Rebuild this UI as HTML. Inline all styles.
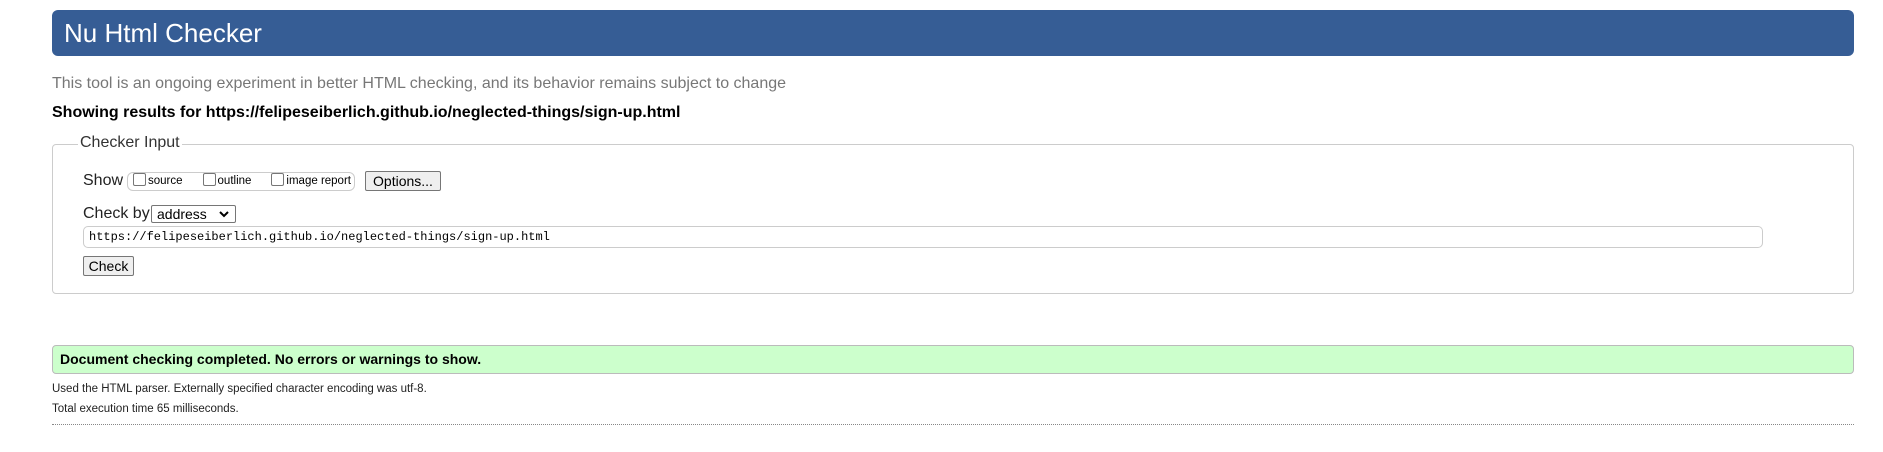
<!DOCTYPE html>
<html><head><meta charset="utf-8"><style>
*{box-sizing:border-box}
body{margin:0;width:1883px;height:452px;background:#fff;font-family:"Liberation Sans",Arial,sans-serif;position:relative;overflow:hidden}
.a{position:absolute;white-space:nowrap}
#h{left:52px;top:10px;width:1802px;height:46px;background:#365d95;border-radius:6px;color:#fff;font-size:26px;padding-left:12px;line-height:46px}
#fs{left:52px;top:144px;width:1802px;height:150px;border:1px solid #ccc;border-radius:4px}
.btn{background:#efefef;border:1px solid #767676;border-radius:2px;font-size:14px;text-align:center;color:#000}
.cb{display:inline-block;width:13px;height:13px;border:1px solid #767676;border-radius:2px;vertical-align:-2px;margin-right:2px}
</style></head><body>
<div class="a" id="h">Nu Html Checker</div>
<div class="a" style="left:52px;top:75px;font-size:16px;color:#777">This tool is an ongoing experiment in better HTML checking, and its behavior remains subject to change</div>
<div class="a" style="left:52px;top:104px;font-size:16px;font-weight:bold;color:#000">Showing results for https://felipeseiberlich.github.io/neglected-things/sign-up.html</div>
<div class="a" id="fs"></div>
<div class="a" style="left:78px;top:134px;background:#fff;padding:0 2px;font-size:16px;color:#333">Checker Input</div>
<div class="a" style="left:83px;top:172px;font-size:16px;color:#222">Show</div>
<div class="a" style="left:127px;top:172px;width:228px;height:19px;border:1px solid #ccc;border-radius:6px;font-size:11.5px;line-height:17px;padding-left:5px;color:#000"><span class="cb"></span>source<span style="display:inline-block;width:20px"></span><span class="cb"></span>outline<span style="display:inline-block;width:20px"></span><span class="cb"></span>image report</div>
<div class="a btn" style="left:365px;top:171px;width:76px;height:20px;line-height:18px">Options...</div>
<div class="a" style="left:83px;top:205px;font-size:16px;color:#222">Check by</div>
<div class="a" style="left:151px;top:205px;width:85px;height:18px;border:1px solid #767676;border-radius:2px;font-size:14px;line-height:16px;padding-left:5px">address<svg style="position:absolute;right:6px;top:5px" width="10" height="7" viewBox="0 0 10 7"><path d="M1 1l4 4 4-4" stroke="#000" stroke-width="2" fill="none"/></svg></div>
<div class="a" style="left:83px;top:226px;width:1680px;height:22px;border:1px solid #ccc;border-radius:5px;font-family:'Liberation Mono',monospace;font-size:12px;line-height:20px;padding-left:5px">https://felipeseiberlich.github.io/neglected-things/sign-up.html</div>
<div class="a btn" style="left:83px;top:256px;width:51px;height:20px;line-height:18px">Check</div>
<div class="a" style="left:52px;top:345px;width:1802px;height:29px;background:#ccffcc;border:1px solid #bbb;border-radius:4px;font-size:14px;font-weight:bold;line-height:27px;padding-left:7px">Document checking completed. No errors or warnings to show.</div>
<div class="a" style="left:52px;top:383px;font-size:11.5px;color:#222">Used the HTML parser. Externally specified character encoding was utf-8.</div>
<div class="a" style="left:52px;top:403px;font-size:11.5px;color:#222">Total execution time 65 milliseconds.</div>
<div class="a" style="left:52px;top:424px;width:1802px;border-top:1px dotted #888"></div>
</body></html>
